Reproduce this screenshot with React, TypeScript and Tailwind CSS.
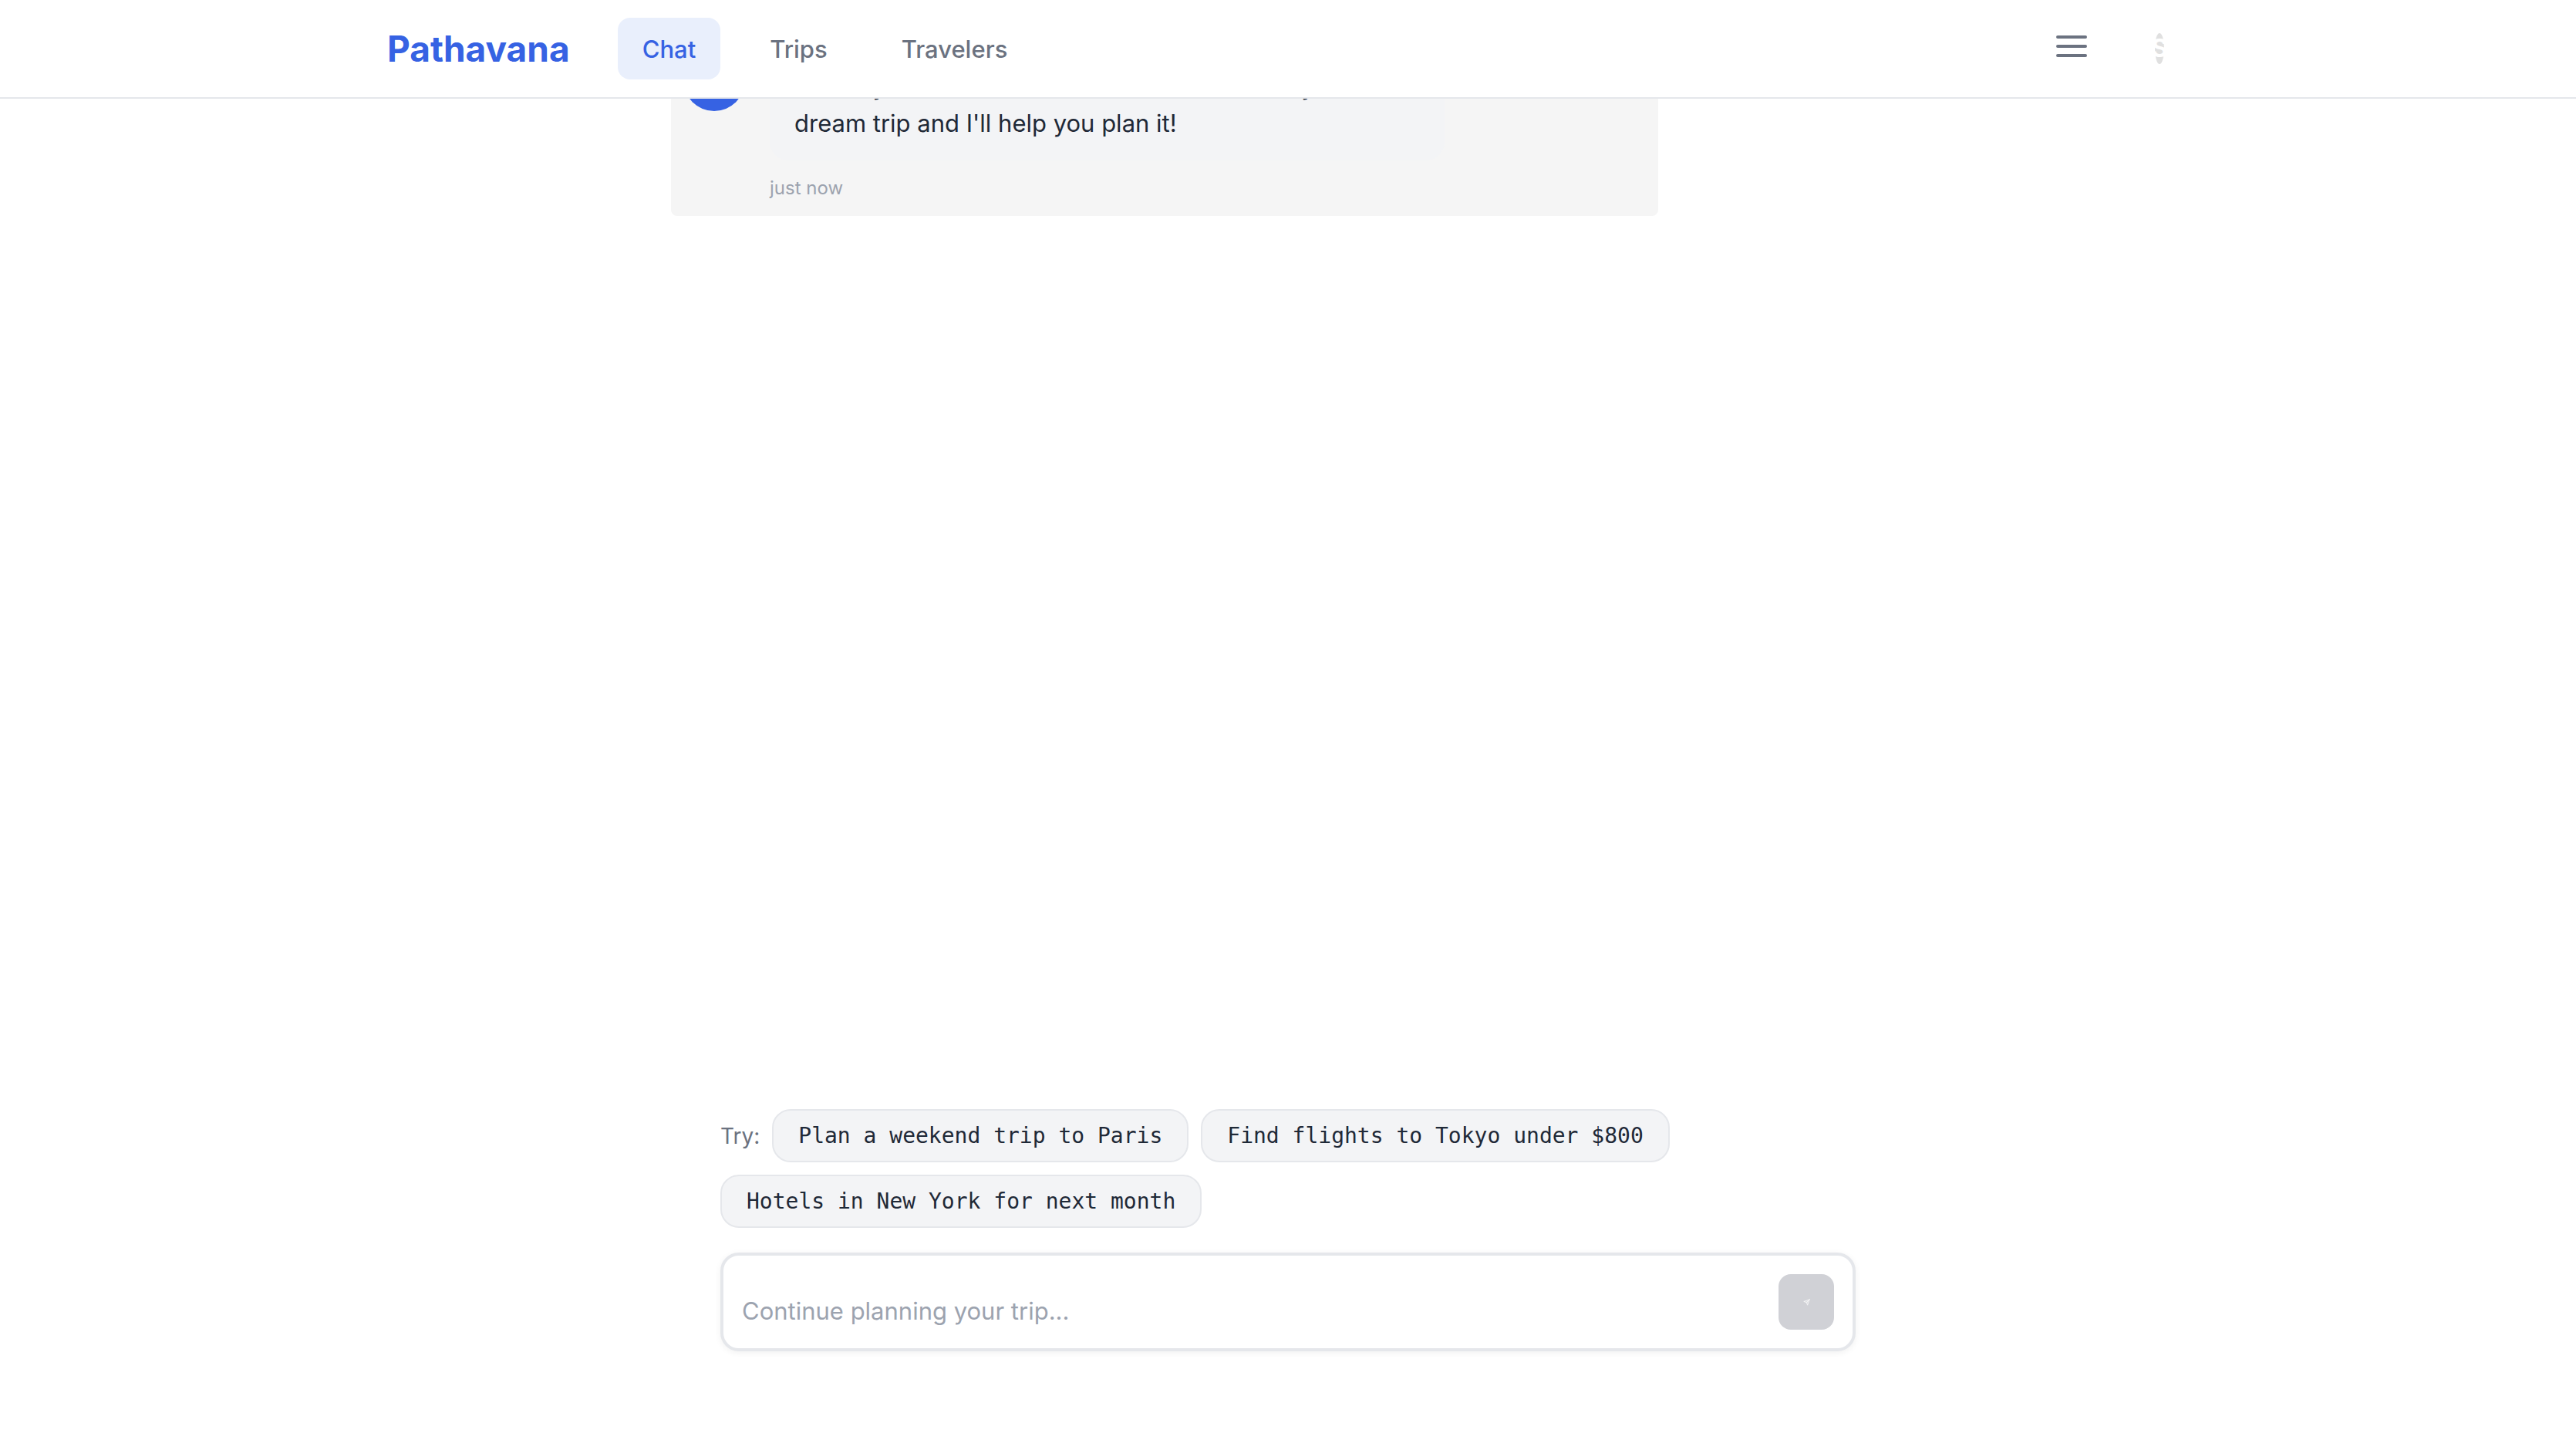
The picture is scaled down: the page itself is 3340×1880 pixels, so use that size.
const navLinks = [
  { label: "Chat", active: true },
  { label: "Trips", active: false },
  { label: "Travelers", active: false },
];

const suggestions = [
  "Plan a weekend trip to Paris",
  "Find flights to Tokyo under $800",
  "Hotels in New York for next month",
];

function Header() {
  return (
    <header className="sticky top-0 z-10 border-b-2 border-[#e5e7eb] bg-white">
      <div className="mx-auto flex h-[126px] max-w-[2400px] items-center justify-between px-8">
        <div className="flex items-center gap-[62px]">
          <a href="#" className="text-[46px] font-bold leading-[72px] text-[#3662e3]">
            Pathavana
          </a>
          <nav className="flex gap-8">
            {navLinks.map((link) => (
              <a
                key={link.label}
                href="#"
                aria-current={link.active ? "page" : undefined}
                className={
                  link.active
                    ? "rounded-2xl bg-[#e9effc] px-8 pt-[17px] pb-[15px] text-[31px] font-medium leading-[48px] text-[#3662e3]"
                    : "rounded-2xl px-8 pt-[17px] pb-[15px] text-[31px] font-medium leading-[48px] text-[#6b7280]"
                }
              >
                {link.label}
              </a>
            ))}
          </nav>
        </div>
        <div className="flex items-center">
          <button type="button" aria-label="Menu" className="mr-[88px]">
            <svg viewBox="0 0 40 34" className="h-[34px] w-10" fill="none" stroke="#6b7280" strokeWidth="4" strokeLinecap="round">
              <path d="M2 2h36M2 14h36M2 26h36" />
            </svg>
          </button>
          <button
            type="button"
            aria-label="Account"
            className="mr-8 flex h-10 w-3 items-center justify-center rounded-[50%] bg-[#e0e0e0] text-[32px] font-bold leading-10 text-white"
          >
            S
          </button>
        </div>
      </div>
    </header>
  );
}

function Message() {
  return (
    <article className="-mt-20 flex w-4/5 gap-8 rounded-lg bg-[#f5f5f5] px-4 py-4">
      <div className="size-20 shrink-0 rounded-full bg-[#3662e3]" />
      <div>
        <p className="w-[875px] rounded-3xl bg-[#f3f4f6] px-8 py-6 text-[31px] leading-[48px] text-[#1f2937]">
          Hi! I'm your AI travel assistant. Tell me about your dream trip and I'll help you plan it!
        </p>
        <time className="mt-4 block text-[24px] leading-[40px] text-[#9ca3af]">just now</time>
      </div>
    </article>
  );
}

function SendIcon() {
  return (
    <svg viewBox="0 0 24 24" className="size-[9px]" fill="white" fillOpacity="0.35" stroke="white" strokeOpacity="0.8" strokeWidth="2" strokeLinecap="round" strokeLinejoin="round">
      <path d="M22 2 11 13M22 2l-7 20-4-9-9-4 20-7z" />
    </svg>
  );
}

function Composer() {
  return (
    <form className="px-16 pb-32" onSubmit={(e) => e.preventDefault()}>
      <div className="flex flex-wrap items-center gap-4">
        <span className="text-[28px] leading-8 text-[#6b7280]">Try:</span>
        {suggestions.map((text) => (
          <button
            key={text}
            type="button"
            className="rounded-3xl border-2 border-[#e5e7eb] bg-[#f3f4f6] px-8 py-4 font-['DejaVu_Sans_Mono',monospace] text-[28px] leading-[33px] text-[#1f2937]"
          >
            {text}
          </button>
        ))}
      </div>
      <div className="mt-8 flex items-end gap-6 rounded-3xl border-4 border-[#e5e7eb] bg-white p-6 shadow-[0_2px_8px_rgba(0,0,0,0.06)]">
        <textarea
          rows={1}
          aria-label="Message"
          placeholder="Continue planning your trip..."
          className="h-12 min-w-0 flex-1 resize-none text-[31px] leading-[48px] text-[#1f2937] outline-none placeholder:text-[#9ca3af]"
        />
        <button type="submit" aria-label="Send" className="flex size-[72px] items-center justify-center rounded-2xl bg-[#d0d1d6]">
          <SendIcon />
        </button>
      </div>
    </form>
  );
}

export default function App() {
  return (
    <div className="flex min-h-screen flex-col bg-white font-['Inter',sans-serif]">
      <Header />
      <main className="mx-auto flex w-full max-w-[1600px] flex-1 flex-col justify-between">
        <Message />
        <Composer />
      </main>
    </div>
  );
}
